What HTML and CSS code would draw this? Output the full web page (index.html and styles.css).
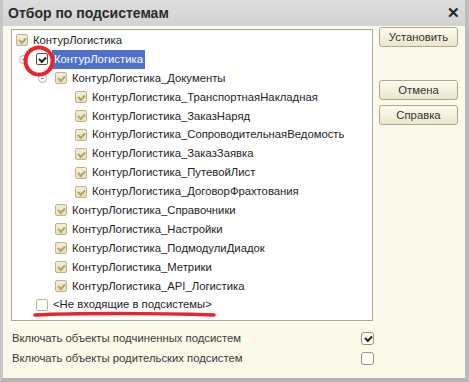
FILE: index.html
```html
<!DOCTYPE html>
<html lang="ru">
<head>
    <meta charset="UTF-8">
    <title>Отбор по подсистемам</title>
    <link rel="stylesheet" href="styles.css">
</head>
<body>

    <div class="window">
        <div class="titlebar">
            <span class="title">Отбор по подсистемам</span>
            <span class="close">&#x2715;</span>
        </div>

        <div class="main">
            <div class="tree">
                <div class="row lvl0">
                    <span class="box on"></span>
                    <span class="label">КонтурЛогистика</span>
                </div>
                <div class="row lvl1">
                    <span class="toggle"></span>
                    <span class="box on dark"></span>
                    <span class="label selected">КонтурЛогистика</span>
                </div>
                <div class="row lvl2">
                    <span class="toggle"></span>
                    <span class="box on"></span>
                    <span class="label">КонтурЛогистика_Документы</span>
                </div>
                <div class="row lvl3">
                    <span class="box on"></span>
                    <span class="label">КонтурЛогистика_ТранспортнаяНакладная</span>
                </div>
                <div class="row lvl3">
                    <span class="box on"></span>
                    <span class="label">КонтурЛогистика_ЗаказНаряд</span>
                </div>
                <div class="row lvl3">
                    <span class="box on"></span>
                    <span class="label">КонтурЛогистика_СопроводительнаяВедомость</span>
                </div>
                <div class="row lvl3">
                    <span class="box on"></span>
                    <span class="label">КонтурЛогистика_ЗаказЗаявка</span>
                </div>
                <div class="row lvl3">
                    <span class="box on"></span>
                    <span class="label">КонтурЛогистика_ПутевойЛист</span>
                </div>
                <div class="row lvl3">
                    <span class="box on"></span>
                    <span class="label">КонтурЛогистика_ДоговорФрахтования</span>
                </div>
                <div class="row lvl2">
                    <span class="box on"></span>
                    <span class="label">КонтурЛогистика_Справочники</span>
                </div>
                <div class="row lvl2">
                    <span class="box on"></span>
                    <span class="label">КонтурЛогистика_Настройки</span>
                </div>
                <div class="row lvl2">
                    <span class="box on"></span>
                    <span class="label">КонтурЛогистика_ПодмодулиДиадок</span>
                </div>
                <div class="row lvl2">
                    <span class="box on"></span>
                    <span class="label">КонтурЛогистика_Метрики</span>
                </div>
                <div class="row lvl2">
                    <span class="box on"></span>
                    <span class="label">КонтурЛогистика_API_Логистика</span>
                </div>
                <div class="row lvl1">
                    <span class="box"></span>
                    <span class="label">&lt;Не входящие в подсистемы&gt;</span>
                </div>

                <!-- red marks drawn over the tree -->
                <svg class="mark-circle" width="34" height="34" viewBox="0 0 34 34">
                    <circle cx="17" cy="17" r="13.5" fill="none" stroke="#e8252b" stroke-width="4"/>
                </svg>
                <svg class="mark-line" width="184" height="10" viewBox="0 0 184 10">
                    <path d="M2 5 C40 3 120 3 181 5" fill="none" stroke="#e8252b" stroke-width="3.5" stroke-linecap="round"/>
                </svg>
            </div>

            <div class="buttons">
                <button class="btn">Установить</button>
                <button class="btn first">Отмена</button>
                <button class="btn">Справка</button>
            </div>
        </div>

        <div class="options">
            <div class="option">
                <span>Включать объекты подчиненных подсистем</span>
                <span class="opt-box on"></span>
            </div>
            <div class="option">
                <span>Включать объекты родительских подсистем</span>
                <span class="opt-box"></span>
            </div>
        </div>
    </div>

</body>
</html>
```

FILE: styles.css
```css
body {
    margin: 0;
    padding: 0;
    font-family: "Liberation Sans", Arial, sans-serif;
    font-size: 11.3px;
    color: #1e1e1e;
    background: #ffffff;
}
.window {
    width: 469px;
    height: 382px;
    box-sizing: border-box;
    border-left: 3px solid #c6c6c6;
    border-right: 4px solid #bdbdbd;
    border-bottom: 4px solid #b5b5b5;
    background: #fbf9ea;
    display: flex;
    flex-direction: column;
}
.titlebar {
    height: 26px;
    background: linear-gradient(#dedede, #d2d2d2);
    display: flex;
    align-items: center;
    justify-content: space-between;
    padding: 0 5px 0 5px;
}
.title {
    font-size: 14px;
    font-weight: bold;
    color: #2b2b2b;
}
.close {
    font-size: 15px;
    font-weight: bold;
    color: #222;
}
.main {
    display: flex;
    padding: 3px 0 0 8px;
}
.tree {
    position: relative;
    width: 362px;
    height: 292px;
    box-sizing: border-box;
    border: 1px solid #aaa9a0;
    background: #ffffff;
    padding-top: 1px;
}
.row {
    height: 18.9px;
    display: flex;
    align-items: center;
}
.lvl0 { padding-left: 4px; }
.lvl1 { padding-left: 24px; }
.lvl2 { padding-left: 43px; }
.lvl3 { padding-left: 63px; }

.toggle {
    width: 7px;
    height: 7px;
    border: 1px solid #b0b0b0;
    border-radius: 50%;
    margin-left: -17px;
    margin-right: 8px;
    position: relative;
}
.toggle::after {
    content: "";
    position: absolute;
    left: 2px;
    top: 3px;
    width: 3px;
    height: 1px;
    background: #8a8a8a;
}
.box {
    width: 10px;
    height: 10px;
    border: 1px solid #bdb38c;
    border-radius: 2px;
    background: #ffffff;
    margin-right: 5px;
    position: relative;
    flex: none;
}
.box.on {
    background: linear-gradient(#f4eed6, #e8dfbd);
}
.box.on::after {
    content: "";
    position: absolute;
    left: 2px;
    top: 1px;
    width: 5px;
    height: 3px;
    border-left: 2px solid #b3a36a;
    border-bottom: 2px solid #b3a36a;
    transform: rotate(-45deg) translate(-1px, 1px);
}
.box.dark {
    border-color: #5a5444;
    background: #fbfaf6;
}
.box.dark::after {
    border-color: #1f1f1f;
}
.label {
    white-space: nowrap;
    line-height: 19px;
}
.selected {
    background: #4f6fc9;
    color: #ffffff;
    padding: 0 2px;
    margin-left: -1px;
}
.mark-circle {
    position: absolute;
    left: 10px;
    top: 14px;
}
.mark-line {
    position: absolute;
    left: 21px;
    top: 280px;
}
.buttons {
    display: flex;
    flex-direction: column;
    margin-left: 6px;
    margin-top: -2px;
}
.btn {
    width: 79px;
    height: 20px;
    border: 1px solid #b0a88d;
    border-radius: 3px;
    background: linear-gradient(#fdfbf1, #ece6cc);
    font-family: "Liberation Sans", Arial, sans-serif;
    font-size: 11.3px;
    color: #333;
    padding: 0;
    margin-bottom: 5px;
}
.btn.first {
    margin-top: 28px;
}
.options {
    padding: 7px 0 0 9px;
    color: #3a3a3a;
}
.option {
    height: 20px;
    display: flex;
    align-items: center;
    justify-content: space-between;
    width: 362px;
}
.opt-box {
    width: 11px;
    height: 11px;
    border: 1px solid #9e9577;
    border-radius: 3px;
    background: #ffffff;
    position: relative;
}
.opt-box.on::after {
    content: "";
    position: absolute;
    left: 3px;
    top: 1px;
    width: 5px;
    height: 3px;
    border-left: 2px solid #222;
    border-bottom: 2px solid #222;
    transform: rotate(-45deg) translate(-1px, 1px);
}
```
